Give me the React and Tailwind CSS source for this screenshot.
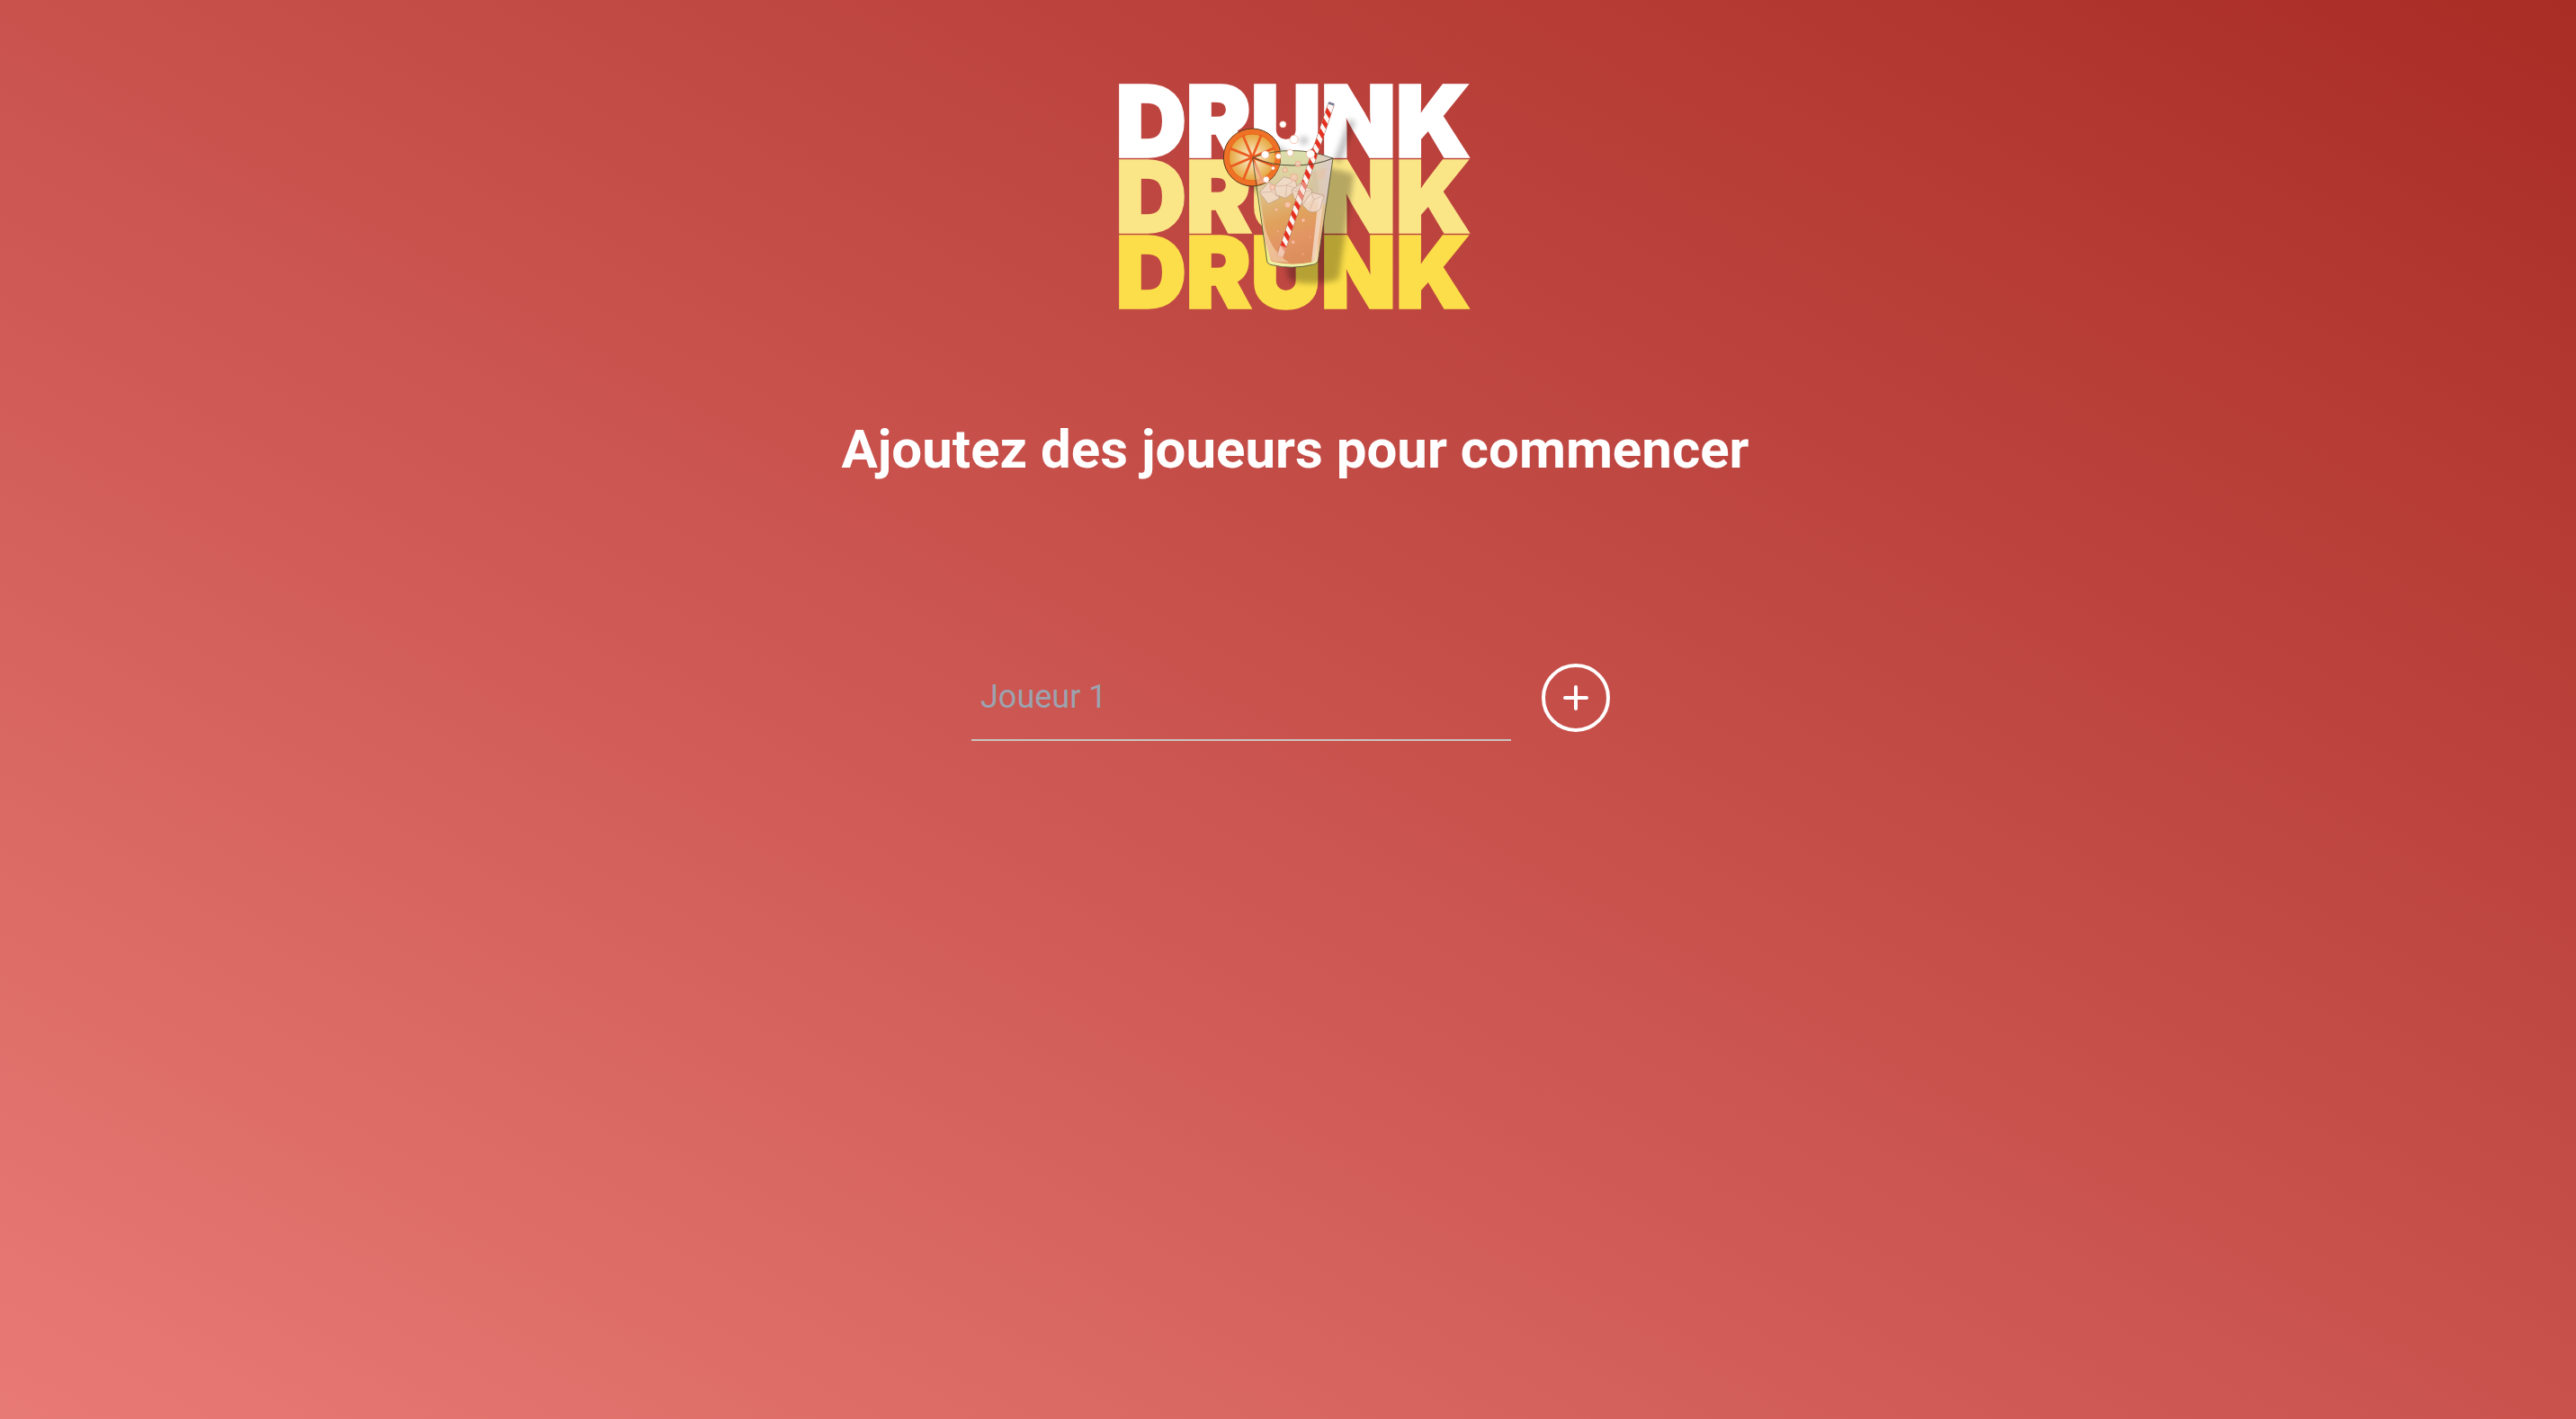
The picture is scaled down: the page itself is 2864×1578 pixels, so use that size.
import { useState } from "react";

const ROWS = [
  { y: 313, fill: "#ffffff" },
  { y: 565, fill: "#fbe687" },
  { y: 817, fill: "#fbde49" },
];

const SEGMENTS = [22, 67, 112, 157, 202, 247, 292, 337];
const STRIPES = [14, 50, 86, 122, 158, 194, 230, 266, 302, 338, 374, 410, 446, 482];

const CUBES = [
  "M541 432 L574 396 L600 420 L608 452 L570 470 Z",
  "M590 412 L622 380 L660 390 L668 420 L628 452 L597 440 Z",
  "M648 424 L678 402 L716 424 L714 460 L684 474 L656 450 Z",
  "M684 474 L714 432 L756 442 L744 486 Q732 502 706 496 Z",
];

const CUBE_EDGES =
  "M541 432 L583 430 L608 452 M583 430 L574 396 M590 412 L632 408 L668 420 M632 408 L628 452 M660 390 L632 408 M648 424 L686 432 L716 424 M686 432 L684 474 M714 432 L722 456 L756 442 M722 456 L706 496";

const BUBBLES = [
  [619, 205, 11, 1],
  [656, 255, 14, 1],
  [560, 306, 13, 1],
  [604, 311, 9, 1],
  [643, 300, 11, 1],
  [711, 304, 14, 1],
  [669, 337, 9, 0.6],
  [586, 351, 6, 1],
  [626, 357, 8, 0.5],
  [656, 382, 12, 0.5],
  [563, 389, 10, 0.9],
  [584, 415, 9, 0.5],
  [635, 473, 10, 0.6],
  [597, 489, 6, 0.5],
  [687, 525, 6, 0.6],
  [602, 562, 4, 0.3],
  [709, 582, 3, 0.3],
  [653, 598, 6, 0.5],
  [686, 638, 3, 0.4],
];

const GLASS =
  "M518 316 Q650 268 786 318 L737 656 Q736 668 722 672 Q650 690 582 674 Q567 671 566 660 Z";
const LIQUID =
  "M542 436 Q650 420 752 440 L726 650 Q724 662 712 665 Q650 678 590 664 Q577 661 574 648 Z";

function Logo() {
  return (
    <svg
      className="h-[300px] w-[440px]"
      viewBox="0 0 1320 900"
      role="img"
      aria-label="Drunk Drunk Drunk"
    >
      <defs>
        <linearGradient id="glass" x1="0" y1="0" x2="0" y2="1">
          <stop offset="0" stopColor="#dbe0ae" />
          <stop offset="0.3" stopColor="#dccb9c" />
          <stop offset="0.75" stopColor="#edb689" />
          <stop offset="1" stopColor="#f3efb0" />
        </linearGradient>
        <linearGradient id="liquid" x1="0" y1="0" x2="0.3" y2="1">
          <stop offset="0" stopColor="#dcc288" />
          <stop offset="0.45" stopColor="#e0a25c" />
          <stop offset="0.75" stopColor="#e39564" />
          <stop offset="1" stopColor="#dc8f5c" />
        </linearGradient>
        <linearGradient id="shine" x1="0" y1="0" x2="1" y2="0">
          <stop offset="0" stopColor="#dcc9c4" stopOpacity="0" />
          <stop offset="1" stopColor="#dcc9cd" stopOpacity="0.95" />
        </linearGradient>
        <radialGradient id="pulp">
          <stop offset="0" stopColor="#fff3e0" />
          <stop offset="0.5" stopColor="#f0cd8a" />
          <stop offset="1" stopColor="#e6a53d" />
        </radialGradient>
        <filter id="soft" x="-30%" y="-30%" width="160%" height="160%">
          <feGaussianBlur stdDeviation="10" />
        </filter>
        <clipPath id="glassClip">
          <path d={GLASS} />
        </clipPath>
      </defs>

      {ROWS.map((row) => (
        <text
          key={row.y}
          x="62"
          y={row.y}
          fill={row.fill}
          stroke={row.fill}
          strokeWidth="10"
          className="font-['Inter',sans-serif] text-[324px] font-black"
        >
          DRUNK
        </text>
      ))}

      <g filter="url(#soft)" opacity="0.27">
        <path d={GLASS} transform="translate(70 54)" />
        <circle cx="575" cy="358" r="84" />
        <circle cx="689" cy="259" r="13" />
        <path d="M850 192 L800 330" stroke="#000" strokeWidth="22" />
      </g>

      <circle cx="517" cy="315" r="96" fill="#ef7226" stroke="#5b3a1e" strokeWidth="3" />
      <circle cx="517" cy="315" r="78" fill="url(#pulp)" stroke="#e8651c" strokeWidth="3" />
      {SEGMENTS.map((angle) => (
        <path
          key={angle}
          d="M517 315 H597"
          transform={`rotate(${angle} 517 315)`}
          stroke="#ec5b20"
          strokeWidth="8"
        />
      ))}

      <path
        d="M610 292 Q700 286 786 318 L737 656 Q736 668 722 672 Q650 690 582 674 Q567 671 566 660 L532 412 Q596 400 612 330 Z"
        fill="url(#glass)"
      />
      <path d={LIQUID} fill="url(#liquid)" />
      <g clipPath="url(#glassClip)">
        <path d="M690 290 H786 L764 470 H730 Z" fill="url(#shine)" />
        <path d="M716 366 L764 348 L758 384 L718 396 Z" fill="#e8bfa4" opacity="0.5" />
        <path d="M738 450 L756 440 L728 650 Q724 660 714 664 Z" fill="#f4ded0" opacity="0.8" />
        <path d="M724 350 Q744 400 736 470 L700 440 Z" fill="#cdbf9e" opacity="0.5" />
        <path d="M538 440 Q556 620 640 666 L590 662 Q574 658 572 640 Z" fill="#f5d6b0" opacity="0.65" />
        <path d="M520 326 L532 340 L560 400 L534 404 Z" fill="#f1c6a8" opacity="0.6" />
        <path d="M528 400 L564 662 L582 672 L560 600 L538 430 Z" fill="#eef584" opacity="0.9" />
        <path d="M574 668 Q650 684 728 668" fill="none" stroke="#eff0a4" strokeWidth="8" />
      </g>

      {CUBES.map((cube) => (
        <path
          key={cube}
          d={cube}
          fill="#f2dccd"
          fillOpacity="0.85"
          stroke="#b8957f"
          strokeWidth="2"
        />
      ))}
      <path d={CUBE_EDGES} fill="none" stroke="#c6a18c" strokeWidth="1.5" />

      <g transform="translate(780 138) rotate(18.6)">
        <rect x="-11" y="0" width="22" height="534" fill="#8b4a40" />
        <rect x="-10" y="0" width="20" height="534" fill="#fdf6f2" />
        {STRIPES.map((y) => (
          <path key={y} d="M-10 0 L10 16 V34 L-10 18 Z" transform={`translate(0 ${y})`} fill="#e5301f" />
        ))}
        <rect x="-10" y="275" width="20" height="70" fill="#f2dccd" opacity="0.5" />
        <rect x="-11" y="500" width="22" height="40" fill="#efb59a" opacity="0.75" />
        <rect x="-10" y="-6" width="20" height="8" fill="#7d7f96" />
      </g>

      <path d={GLASS} fill="none" stroke="#4c4a34" strokeWidth="2.5" />
      <path d="M518 316 Q580 342 652 342 Q730 342 786 318" fill="none" stroke="#4c4a34" strokeWidth="3" />

      {BUBBLES.map(([cx, cy, r, opacity]) => (
        <circle
          key={`${cx}-${cy}`}
          cx={cx}
          cy={cy}
          r={r}
          fill={opacity < 0.8 ? "#f8cdb8" : "#ffffff"}
          fillOpacity={Math.min(1, opacity + 0.2)}
          stroke="#f0906c"
          strokeOpacity="0.8"
          strokeWidth="2"
        />
      ))}
    </svg>
  );
}

export default function App() {
  const [name, setName] = useState("");

  return (
    <main className="flex min-h-screen flex-col items-center bg-linear-to-tr from-[#e87a75] via-[#c9524d] to-[#a92c25] pt-[70px] pl-4 font-['Roboto',sans-serif]">
      <Logo />
      <h1 className="mt-[92px] text-center text-[60px] leading-[76px] font-bold text-white">
        Ajoutez des joueurs pour commencer
      </h1>
      <form
        className="mt-[190px] flex items-center gap-[34px] pr-[10px]"
        onSubmit={(event) => event.preventDefault()}
      >
        <input
          type="text"
          aria-label="Joueur 1"
          placeholder="Joueur 1"
          value={name}
          onChange={(event) => setName(event.target.value)}
          className="h-24 w-[600px] border-b-2 border-[#c8c4c0] bg-transparent px-[10px] text-[36px] text-white outline-none placeholder:text-[#9ca3af]"
        />
        <button
          type="submit"
          aria-label="Ajouter un joueur"
          className="flex size-[76px] items-center justify-center rounded-full border-4 border-white text-white"
        >
          <svg className="size-7" viewBox="0 0 28 28" fill="none" stroke="currentColor" strokeWidth="4" strokeLinecap="round">
            <path d="M14 2 V26 M2 14 H26" />
          </svg>
        </button>
      </form>
    </main>
  );
}
